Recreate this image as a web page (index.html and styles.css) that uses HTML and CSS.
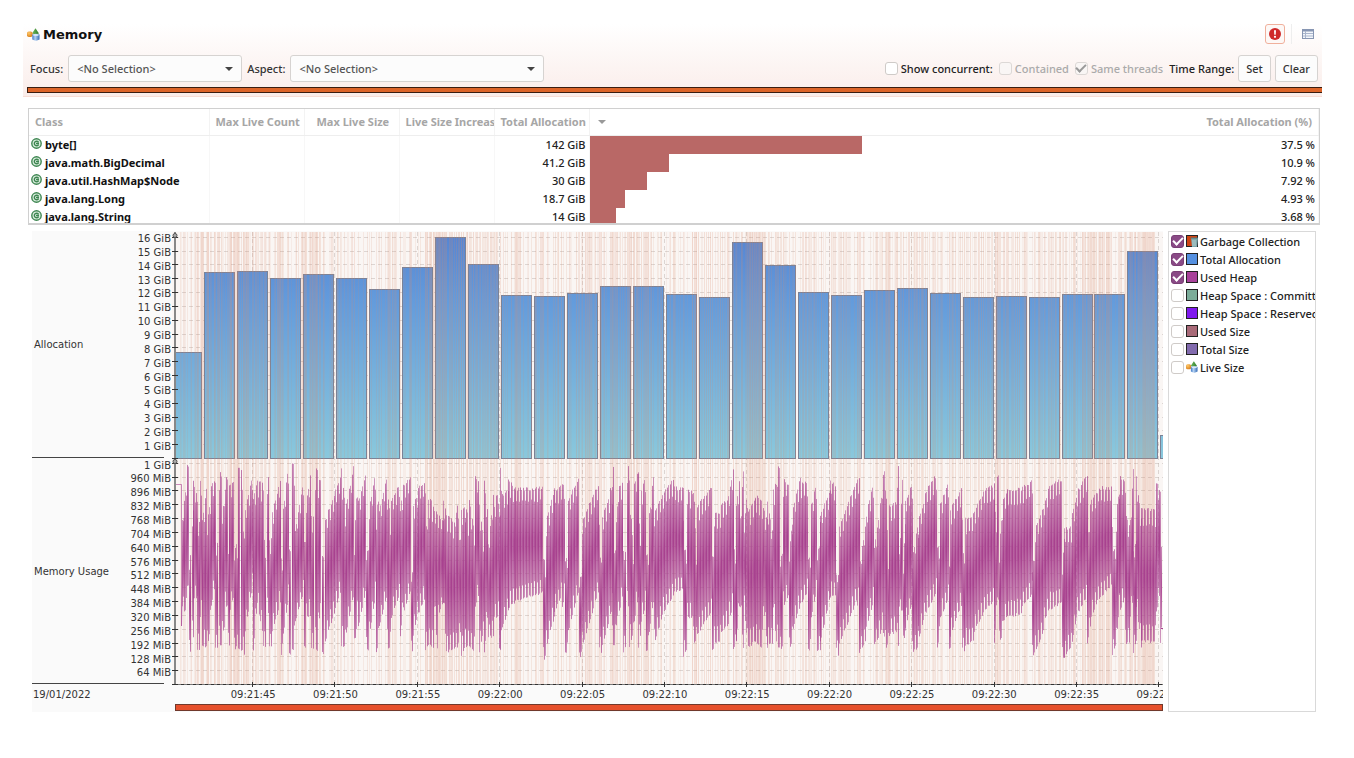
FILE: index.html
```
<!DOCTYPE html>
<html lang="en">
<head>
    <meta charset="UTF-8">
    <meta name="viewport" content="width=device-width, initial-scale=1.0">
    <title>Memory</title>
    <link rel="stylesheet" href="styles.css">
</head>
<body>
    <svg class="defs" width="0" height="0" aria-hidden="true">
        <defs>
            <radialGradient id="orangeBall" cx=".35" cy=".3" r=".8"><stop offset="0" stop-color="#ffc766"/><stop offset="1" stop-color="#d47a18"/></radialGradient>
            <linearGradient id="greenCone" x1="0" x2="1"><stop offset="0" stop-color="#6fb95d"/><stop offset="1" stop-color="#2f7d2c"/></linearGradient>
            <linearGradient id="blueCan" x1="0" x2="1"><stop offset="0" stop-color="#3f78c6"/><stop offset=".4" stop-color="#b4d2f3"/><stop offset="1" stop-color="#356bb5"/></linearGradient>
        </defs>
        <symbol id="shapes" viewBox="0 0 13 13">
            <path d="M8.500 0.300 L12 5.500 Q8.500 7 5 5.500 Z" fill="url(#greenCone)"/>
            <rect x="0" y="3.500" width="5.500" height="5.500" rx="1.800" fill="url(#orangeBall)"/>
            <path d="M5.300 6.500 Q9 5 12.500 6.500 V11.500 Q9 13.800 5.300 11.500 Z" fill="url(#blueCan)"/>
            <ellipse cx="8.900" cy="6.900" rx="3" ry="1" fill="#d8e9fb"/>
        </symbol>
        <symbol id="classIcon" viewBox="0 0 11 11">
            <circle cx="5.500" cy="5.500" r="4.700" fill="#dceee0" stroke="#3e8651" stroke-width="1.400"/>
            <path d="M7.600 4.300 A2.300 2.300 0 1 0 7.600 6.700 M5 5.500 H8" fill="none" stroke="#3e8651" stroke-width="1.400"/>
        </symbol>
    </svg>

    <header class="page-header">
        <div class="title-row">
            <svg class="title-icon"><use href="#shapes"/></svg>
            <h1>Memory</h1>
            <button type="button" class="alert-button" aria-label="Show results">
                <svg width="12" height="12" viewBox="0 0 12 12">
                    <circle cx="6" cy="6" r="6" fill="#cf2a2a"/>
                    <path d="M5 2.200 H7 L6.700 6.800 H5.300 Z" fill="#fff"/>
                    <circle cx="6" cy="8.800" r="1.100" fill="#fff"/>
                </svg>
            </button>
            <button type="button" class="table-button" aria-label="Table settings">
                <svg width="12" height="10" viewBox="0 0 12 10">
                    <rect x=".5" y=".5" width="11" height="9" fill="#f3f6fb" stroke="#8796b3"/>
                    <path d="M1 1.500 H11" stroke="#8796b3" stroke-width="2"/>
                    <path d="M1 4.500 H11 M1 7 H11 M3.500 2 V9" stroke="#a9b5cc"/>
                </svg>
            </button>
        </div>
        <div class="toolbar">
            <label for="focus">Focus:</label>
            <span class="select focus"><select id="focus"><option>&lt;No Selection&gt;</option></select></span>
            <label for="aspect">Aspect:</label>
            <span class="select aspect"><select id="aspect"><option>&lt;No Selection&gt;</option></select></span>
            <div class="toolbar-right">
                <label class="check strong"><input type="checkbox">Show concurrent:</label>
                <label class="check disabled"><input type="checkbox" disabled>Contained</label>
                <label class="check disabled"><input type="checkbox" checked disabled>Same threads</label>
                <span class="strong">Time Range:</span>
                <button type="button" class="btn">Set</button>
                <button type="button" class="btn">Clear</button>
            </div>
        </div>
        <div class="range-bar"></div>
    </header>

    <main>
        <div class="table-box">
            <table>
                <colgroup>
                    <col class="col-class"><col class="col-num"><col class="col-num"><col class="col-num"><col class="col-num"><col>
                </colgroup>
                <thead>
                    <tr>
                        <th>Class</th>
                        <th>Max Live Count</th>
                        <th class="size">Max Live Size</th>
                        <th>Live Size Increase</th>
                        <th>Total Allocation</th>
                        <th class="percent"><i class="sort"></i>Total Allocation (%)</th>
                    </tr>
                </thead>
                <tbody id="classes"></tbody>
            </table>
        </div>

        <div class="charts">
            <div class="chart-panel">
                <div class="lane">
                    <span class="lane-name">Allocation</span>
                    <div class="scale" id="allocScale"></div>
                </div>
                <div class="lane">
                    <span class="lane-name">Memory Usage</span>
                    <div class="scale" id="heapScale"></div>
                </div>
                <svg class="plot" id="plot" viewBox="-3 0 991 455" preserveAspectRatio="none">
                    <defs>
                        <linearGradient id="allocFill" gradientUnits="userSpaceOnUse" x1="0" y1="0" x2="0" y2="226">
                            <stop offset="0" stop-color="#5584d2"/>
                            <stop offset=".3" stop-color="#639bdc"/>
                            <stop offset="1" stop-color="#8ac8dc"/>
                        </linearGradient>
                        <linearGradient id="heapFill" x1="0" y1="0" x2="0" y2="1">
                            <stop offset="0" stop-color="#a8418f" stop-opacity=".65"/>
                            <stop offset=".45" stop-color="#a8418f"/>
                            <stop offset=".55" stop-color="#a8418f"/>
                            <stop offset="1" stop-color="#a8418f" stop-opacity=".65"/>
                        </linearGradient>
                    </defs>
                </svg>
                <span class="date">19/01/2022</span>
                <div class="times" id="times"></div>
                <div class="time-range"></div>
            </div>

            <div class="legend">
                <label><input type="checkbox" checked><svg class="swatch" viewBox="0 0 12 12"><rect x=".5" y=".5" width="11" height="11" fill="#cf4413" stroke="#222"/><path d="M5 3 H12 L11 12 H6 Z" fill="#7fa9ad"/><path d="M7 5 V11 M9 5 V11" stroke="#b9d0cf"/><path d="M4.500 3 H12" stroke="#4f7378"/></svg><span>Garbage Collection</span></label>
                <label><input type="checkbox" checked><i class="swatch alloc"></i><span>Total Allocation</span></label>
                <label><input type="checkbox" checked><i class="swatch heap"></i><span>Used Heap</span></label>
                <label><input type="checkbox"><i class="swatch committed"></i><span>Heap Space : Committed</span></label>
                <label><input type="checkbox"><i class="swatch reserved"></i><span>Heap Space : Reserved</span></label>
                <label><input type="checkbox"><i class="swatch used"></i><span>Used Size</span></label>
                <label><input type="checkbox"><i class="swatch total"></i><span>Total Size</span></label>
                <label><input type="checkbox"><svg class="swatch"><use href="#shapes"/></svg><span>Live Size</span></label>
            </div>
        </div>
    </main>
    <script src="charts.js"></script>
</body>
</html>
```
FILE: styles.css
```
* {
    box-sizing: border-box;
}

body {
    margin: 0;
    padding: 24px 32px 0 23px;
    background: #fff;
    color: #222;
    font-family: "Noto Sans", "Open Sans", sans-serif;
    font-size: 11px;
}

.defs {
    position: absolute;
}

.page-header {
    height: 73px;
    background: linear-gradient(#fff, #faedea);
    border-bottom: 1px solid #f8ddd5;
}

.title-row {
    display: flex;
    align-items: center;
    height: 20px;
    padding: 0 8px 0 4px;
}

.title-icon {
    width: 13px;
    height: 13px;
}

h1 {
    margin: 0 auto 0 3px;
    font: bold 13px "DejaVu Sans", sans-serif;
    color: #111;
}

button {
    font: inherit;
    color: #333;
}

.alert-button {
    display: flex;
    align-items: center;
    justify-content: center;
    width: 20px;
    height: 20px;
    padding: 0;
    background: #fdf8f6;
    border: 1px solid #f0b09c;
    border-radius: 3px;
}

.table-button {
    display: flex;
    align-items: center;
    justify-content: flex-end;
    width: 23px;
    height: 20px;
    margin-left: 6px;
    padding: 0;
    background: none;
    border: 0;
    border-left: 1px solid #eee;
}

.toolbar {
    display: flex;
    align-items: center;
    height: 28px;
    margin-top: 10px;
    padding: 0 4px 0 7px;
    font-weight: 500;
    color: #333;
}

.select {
    position: relative;
    margin: 0 5px;
}

.select::after {
    content: "";
    position: absolute;
    right: 9px;
    top: 12px;
    border: 4px solid transparent;
    border-top-color: #444;
    border-bottom: 0;
    pointer-events: none;
}

.select select {
    width: 100%;
    height: 27px;
    padding: 0 8px;
    appearance: none;
    background: #fcfcfc;
    border: 1px solid #d6d3d1;
    border-radius: 3px;
    font: inherit;
    color: #555;
}

.focus {
    width: 174px;
}

.aspect {
    width: 254px;
}

.toolbar-right {
    display: flex;
    align-items: center;
    gap: 4px;
    margin-left: auto;
}

.strong {
    color: #222;
}

.check {
    display: flex;
    align-items: center;
    gap: 3px;
    margin-right: 2px;
}

.disabled {
    color: #aaa;
}

input[type="checkbox"] {
    appearance: none;
    flex: none;
    display: grid;
    place-items: center;
    width: 13px;
    height: 13px;
    margin: 0;
    background: #fff;
    border: 1px solid #cfcbc8;
    border-radius: 3px;
}

input[type="checkbox"]:disabled {
    background: #f9f6f5;
    border-color: #dcd8d6;
}

input[type="checkbox"]:checked::after {
    content: "";
    width: 8px;
    height: 4px;
    margin-bottom: 3px;
    border: solid #999;
    border-width: 0 0 2px 2px;
    transform: rotate(-45deg);
}

.btn {
    height: 27px;
    padding: 0 7px;
    background: #fcfcfc;
    border: 1px solid #d6d3d1;
    border-radius: 3px;
}

.range-bar {
    height: 6px;
    margin: 5px 0 0 4px;
    background: #dd6428;
    border: 1px solid #3a1d10;
    border-right: 0;
}

/* class table */

.table-box {
    height: 117px;
    margin: 11px 2px 0 5px;
    overflow: hidden;
    border: 1px solid #d0d0d0;
    border-bottom-width: 2px;
}

table {
    width: 100%;
    table-layout: fixed;
    border-collapse: collapse;
}

.col-class {
    width: 180px;
}

.col-num {
    width: 95px;
}

th {
    height: 26px;
    padding: 0 0 1px 6px;
    overflow: hidden;
    border-right: 1px solid #f3f3f3;
    border-bottom: 1px solid #eee;
    font-weight: bold;
    text-align: left;
    white-space: nowrap;
    color: #a6a6a6;
}

th.size {
    padding-left: 12px;
}

th.percent {
    padding-right: 6px;
    text-align: right;
}

.sort {
    float: left;
    margin: 6px 0 0 2px;
    border: 4px solid transparent;
    border-top-color: #999;
    border-bottom: 0;
}

td {
    height: 18px;
    padding: 0 3px 0 0;
    border-right: 1px solid #f7f7f7;
    line-height: 18px;
    text-align: right;
    white-space: nowrap;
    font-weight: 500;
}

td.name {
    padding-left: 2px;
    text-align: left;
    font-weight: bold;
    color: #111;
}

td.name svg {
    width: 11px;
    height: 11px;
    margin-right: 3px;
}

td.share {
    padding: 0;
}

.meter {
    display: flex;
    justify-content: space-between;
    height: 18px;
    padding-right: 3px;
}

.meter i {
    background: #b96866;
}

/* charts */

.charts {
    display: flex;
    gap: 5px;
    margin: 6px 6px 0 9px;
}

.chart-panel {
    flex: 1;
    min-width: 0;
    display: grid;
    grid-template-columns: 140px 1fr;
    grid-template-rows: 227px 226px 20px 7px;
    padding-bottom: 1px;
    background: #fafafa;
    font: 10px "DejaVu Sans", sans-serif;
    color: #333;
}

.lane {
    grid-column: 1;
    display: flex;
    align-items: center;
    justify-content: space-between;
    margin-right: 8px;
    padding: 1px 0 0 2px;
    border-bottom: 1px solid #444;
}

.scale {
    display: flex;
    flex-direction: column;
    justify-content: space-between;
    height: 221px;
    margin: 0 -7px 4px 0;
    line-height: 13px;
    text-align: right;
}

.plot {
    grid-column: 2;
    grid-row: 1 / 4;
    width: 100%;
    height: 455px;
    margin-top: 1px;
    background: #faf6f4;
    background: linear-gradient(#faf6f4 452px, #fafafa 0);
}

.date {
    grid-column: 1;
    grid-row: 3;
    padding: 5px 0 0 1px;
}

.times {
    grid-column: 2;
    grid-row: 3;
    display: grid;
    grid-template-columns: repeat(12, 8.66%);
    margin-left: 40px;
    padding-top: 5px;
    overflow: hidden;
    text-align: center;
}

.time-range {
    grid-column: 2;
    margin-left: 3px;
    background: #e6502c;
    border: 1px solid #70392c;
}

.legend {
    width: 148px;
    overflow: hidden;
    background: #fff;
    border: 1px solid #d9d9d9;
    font-weight: 500;
}

.legend label {
    display: flex;
    align-items: center;
    height: 18px;
    padding-left: 2px;
    white-space: nowrap;
}

.legend input:checked {
    background: #8a4a86;
    border-color: #7a3f76;
}

.legend input:checked::after {
    border-color: #fff;
}

.swatch {
    flex: none;
    width: 12px;
    height: 12px;
    margin: 0 2px;
}

i.swatch {
    border: 1px solid #222;
}

.alloc {
    background: #5590e0;
}

.heap {
    background: #a8419a;
}

.committed {
    background: #7bac99;
}

.reserved {
    background: #7f19ee;
}

.used {
    background: #a86a78;
}

.total {
    background: #826bae;
}
```
FILE: charts.js
```
const classes = [
    ['byte[]', '142 GiB', 37.5],
    ['java.math.BigDecimal', '41.2 GiB', 10.9],
    ['java.util.HashMap$Node', '30 GiB', 7.92],
    ['java.lang.Long', '18.7 GiB', 4.93],
    ['java.lang.String', '14 GiB', 3.68]
];

// GiB allocated per bucket
const allocation = [
    13.45, 13.5, 13, 13.3, 13, 12.2, 13.8, 16, 14, 11.8, 11.7, 11.9, 12.45, 12.45, 11.85,
    11.65, 15.6, 13.95, 12, 11.8, 12.15, 12.3, 11.9, 11.65, 11.7, 11.65, 11.85, 11.85, 15
];

// from, to, peak at start, peak at end, floor at start, floor at end
const heap = [
    [7,11,60,21,150,157],[12,13,7,7,130,130],[14,15,97,97,194,194],[17,18,50,50,180,180],
    [18,22,20,40,143,140],[22,24,60,62,194,194],[25,26,20,20,160,160],[27,31,62,28,190,190],
    [32,35,60,40,190,170],[36,40,25,22,148,127],[40,42,84,84,190,190],[44,46,7,15,190,190],
    [47,49,50,45,180,170],[50,52,15,20,150,150],[53,54,80,80,190,190],[54,58,24,22,157,140],
    [59,62,87,85,193,190],[63,64,7,7,193,193],[66,69,9,77,193,198],[70,77,50,16,174,130],
    [78,81,40,24,193,157],[82,87,20,24,147,175],[88,90,30,97,190,190],[92,93,17,17,157,157],
    [94,96,80,80,190,190],[97,105,52,20,174,147],[106,107,100,100,197,197],[108,113,50,7,177,143],
    [114,115,90,90,197,197],[117,119,5,5,192,192],[120,128,70,22,164,137],[129,130,80,80,190,190],
    [131,135,40,14,160,160],[136,138,57,57,193,193],[140,142,10,10,193,193],[143,145,20,20,174,147],
    [147,148,97,97,197,197],[150,165,60,17,184,137],[166,170,8,50,190,190],[171,178,45,8,175,140],
    [179,182,80,20,194,160],[183,190,40,16,170,135],[191,193,90,90,194,194],[194,200,45,15,180,140],
    [201,203,70,20,195,190],[204,211,50,20,170,140],[212,215,30,60,192,190],[216,224,40,25,160,140],
    [225,228,50,26,180,150],[229,235,26,16,155,135],[236,237,113,113,195,195],[238,243,46,30,178,155],
    [244,249,25,24,155,142],[250,252,33,70,194,190],[253,258,38,45,188,192],[259,262,50,55,150,192],
    [263,268,55,60,160,145],[268,271,41,55,145,194],[272,280,55,65,195,190],[281,285,34,80,195,175],
    [286,290,50,45,198,190],[290,293,42,60,190,190],[294,299,40,70,190,195],[300,303,18,20,150,138],
    [304,308,45,80,195,175],[309,312,22,50,195,160],[313,318,85,35,180,180],[319,323,45,30,160,160],
    [324,325,55,55,190,194],[325,326,8,8,195,195],[327,333,35,30,170,155],[333,340,20,29,151,145],
    [340,367,29,28,145,136],[368,370,85,118,205,200],[371,379,60,30,190,160],[379,386,30,27,155,140],
    [387,389,25,25,150,140],[390,392,100,98,195,198],[393,403,40,18,175,135],[404,406,118,118,205,195],
    [407,423,60,25,190,135],[424,426,64,103,190,195],[427,434,57,38,188,165],[435,437,30,30,158,150],
    [437,438,6,6,190,190],[439,442,93,45,190,160],[443,447,28,23,160,140],[448,450,90,90,195,190],
    [452,453,6,6,150,150],[454,458,20,95,190,175],[459,463,22,12,165,140],[463,465,12,85,190,180],
    [466,470,30,18,165,150],[471,473,95,95,195,190],[474,478,55,17,175,145],[479,488,52,33,188,155],
    [489,498,31,20,154,140],[499,508,28,29,135,132],[508,511,60,102,200,195],[512,517,30,33,162,160],
    [518,521,14,95,190,180],[522,534,46,30,178,158],[535,536,28,9,158,160],[537,538,95,95,193,193],
    [539,545,52,52,185,185],[546,553,44,38,175,168],[554,558,32,9,160,150],[558,561,87,95,193,185],
    [561,564,44,20,185,150],[565,568,60,12,150,190],[569,572,65,30,150,190],[573,580,52,38,190,185],
    [580,587,36,40,186,192],[588,592,50,60,150,190],[592,597,40,72,188,187],[598,601,30,23,150,185],
    [602,604,7,7,190,190],[605,607,95,95,192,190],[608,613,20,25,150,140],[614,617,90,60,192,185],
    [617,625,50,17,175,148],[626,632,24,23,147,135],[633,635,98,98,193,193],[636,641,45,25,160,135],
    [642,645,102,62,193,195],[645,655,55,30,185,140],[655,660,20,27,140,138],[661,663,114,114,190,198],
    [664,681,66,23,188,145],[682,684,18,18,150,140],[684,690,108,65,195,185],[691,698,55,22,170,145],
    [699,706,88,38,188,175],[707,709,20,13,175,180],[710,713,8,100,194,185],[714,721,45,44,178,175],
    [722,723,6,6,188,188],[724,727,95,20,150,155],[728,730,105,65,188,175],[730,737,40,25,170,145],
    [737,743,98,63,195,190],[743,750,62,35,185,155],[751,761,30,15,155,135],[762,764,87,87,192,180],
    [765,773,45,22,160,143],[774,775,107,107,192,192],[775,786,50,30,180,148],[787,789,60,103,192,195],
    [790,798,58,55,188,185],[799,807,50,35,175,158],[808,819,30,25,155,145],[819,821,40,60,185,160],
    [822,823,17,17,142,142],[824,827,90,45,185,180],[828,832,40,30,165,160],[832,846,31,29,160,157],
    [847,857,28,20,150,138],[857,859,100,100,200,195],[860,868,68,47,195,175],[869,875,42,25,165,150],
    [876,886,25,20,153,145],[887,889,105,80,203,200],[889,896,68,68,200,190],[897,902,55,33,185,155],
    [903,912,30,15,155,140],[912,915,85,45,188,170],[916,922,38,32,160,145],[923,936,28,28,143,128],
    [937,940,65,100,198,190],[941,944,55,25,185,150],[944,950,17,20,155,140],[950,954,55,65,188,185],
    [955,958,60,10,160,140],[958,961,90,80,195,185],[961,966,18,60,150,190],[966,980,50,50,185,185],
    [981,984,23,30,155,140],[985,986,30,75,185,185]
];

// stretches with back to back collections
const busy = [
    [22, 40], [55, 72], [100, 115], [125, 142], [250, 280], [283, 303], [340, 348], [410, 416],
    [436, 442], [452, 474], [515, 522], [572, 595], [600, 606], [707, 715], [786, 792], [818, 824],
    [907, 937], [950, 962], [965, 980]
];

const svgNs = 'http://www.w3.org/2000/svg';
const plot = document.getElementById('plot');

function shape(tag, attrs) {
    const el = document.createElementNS(svgNs, tag);
    for (const key in attrs) el.setAttribute(key, attrs[key]);
    plot.appendChild(el);
}

function rect(x, y, width, height, attrs) {
    shape('rect', { x, y, width, height, ...attrs });
}

function line(x1, y1, x2, y2, attrs) {
    shape('path', { d: `M${x1} ${y1}L${x2} ${y2}`, fill: 'none', ...attrs });
}

let seed = 11;
function random() {
    seed = (seed * 16807) % 2147483647;
    return seed / 2147483647;
}

function drawTable() {
    document.getElementById('classes').innerHTML = classes.map(([name, size, share]) => `
        <tr>
            <td class="name"><svg><use href="#classIcon"/></svg>${name}</td>
            <td></td><td></td><td></td>
            <td>${size}</td>
            <td class="share"><div class="meter"><i style="width: ${share}%"></i><span>${share} %</span></div></td>
        </tr>`).join('');
}

function drawLabels() {
    let alloc = '';
    let mem = '<span>1 GiB</span>';
    for (let i = 16; i > 0; i--) {
        alloc += `<span>${i} GiB</span>`;
        if (i < 16) mem += `<span>${i * 64} MiB</span>`;
    }
    document.getElementById('allocScale').innerHTML = alloc;
    document.getElementById('heapScale').innerHTML = mem;

    let times = '';
    for (let s = 45; s <= 100; s += 5) {
        const min = s < 60 ? 21 : 22;
        times += `<span>09:${min}:${String(s % 60).padStart(2, '0')}</span>`;
    }
    document.getElementById('times').innerHTML = times;
}

function drawCollections() {
    for (let x = 5; x < 986; x += 1) {
        const isBusy = busy.some(([from, to]) => x >= from && x < to);
        if (random() < (isBusy ? 0.8 : 0.55)) {
            rect(x, 0, 1, 452, { fill: '#d98b6c', opacity: (isBusy ? 0.12 : 0.06) + random() * 0.18 });
        }
    }
}

function drawGrid() {
    const dash = { stroke: '#b9aca8', 'stroke-dasharray': '4 3', opacity: 0.45 };
    for (let i = 1; i <= 16; i++) {
        line(0, Math.round(226 - i * 13.83) + 0.5, 988, Math.round(226 - i * 13.83) + 0.5, dash);
        line(0, Math.round(452 - i * 13.83) + 0.5, 988, Math.round(452 - i * 13.83) + 0.5, dash);
    }
    for (let i = 0; i < 12; i++) {
        const x = Math.round(77 + i * 82.4) + 0.5;
        line(x, 0, x, 452, dash);
    }
}

function drawAllocation() {
    const bar = (x, width, gib) => {
        const h = Math.round(gib * 13.83);
        rect(x + 0.5, 226.5 - h, width, h, { fill: 'url(#allocFill)', stroke: '#7c8296' });
    };
    bar(0, 26, 7.65);
    allocation.forEach((gib, i) => bar(Math.round(29.3 + i * 32.97), 30, gib));
    bar(985, 3, 1.65);
}

function drawHeap() {
    shape('path', { d: 'M0 252.5H6.500V394L9 286', fill: 'none', stroke: '#a8418f', opacity: 0.6 });
    for (const [from, to, high0, high1, low0, low1] of heap) {
        for (let x = from; x <= to; x++) {
            const t = to > from ? (x - from) / (to - from) : 0;
            const high = high0 + (high1 - high0) * t + random() * 4;
            const low = low0 + (low1 - low0) * t - random() * 3;
            const step = x % 3;
            const inset = step === 2 ? (low - high) * 0.12 : 0;
            rect(x, 226 + high + inset, 1, low - high - 2 * inset, {
                fill: 'url(#heapFill)',
                opacity: [1, 0.8, 0.9][step]
            });
        }
    }
    line(986, 396.5, 988, 396.5, { stroke: '#a8418f' });
}

function drawAxes() {
    const dark = { stroke: '#333' };
    line(0, 0, 0, 452, { stroke: '#888', 'stroke-width': 2 });
    for (let i = 0; i <= 16; i++) {
        for (const base of [226, 452]) {
            const y = Math.round(base - i * 13.83) + 0.5;
            line(-3, y, 3, y, dark);
        }
    }
    for (const y of [3.5, 229.5]) {
        shape('circle', { cx: 0, cy: y, r: 2, fill: '#aaa', stroke: '#555' });
    }
    line(0, 452.5, 988, 452.5, { stroke: '#777' });
    line(0, 452.5, 988, 452.5, { stroke: '#333', 'stroke-dasharray': '3 3' });
    for (let i = 0; i < 12; i++) {
        const x = Math.round(77 + i * 82.4) + 0.5;
        line(x, 450, x, 455, dark);
    }
}

drawTable();
drawLabels();
drawGrid();
drawAllocation();
drawCollections();
drawHeap();
drawAxes();
```
